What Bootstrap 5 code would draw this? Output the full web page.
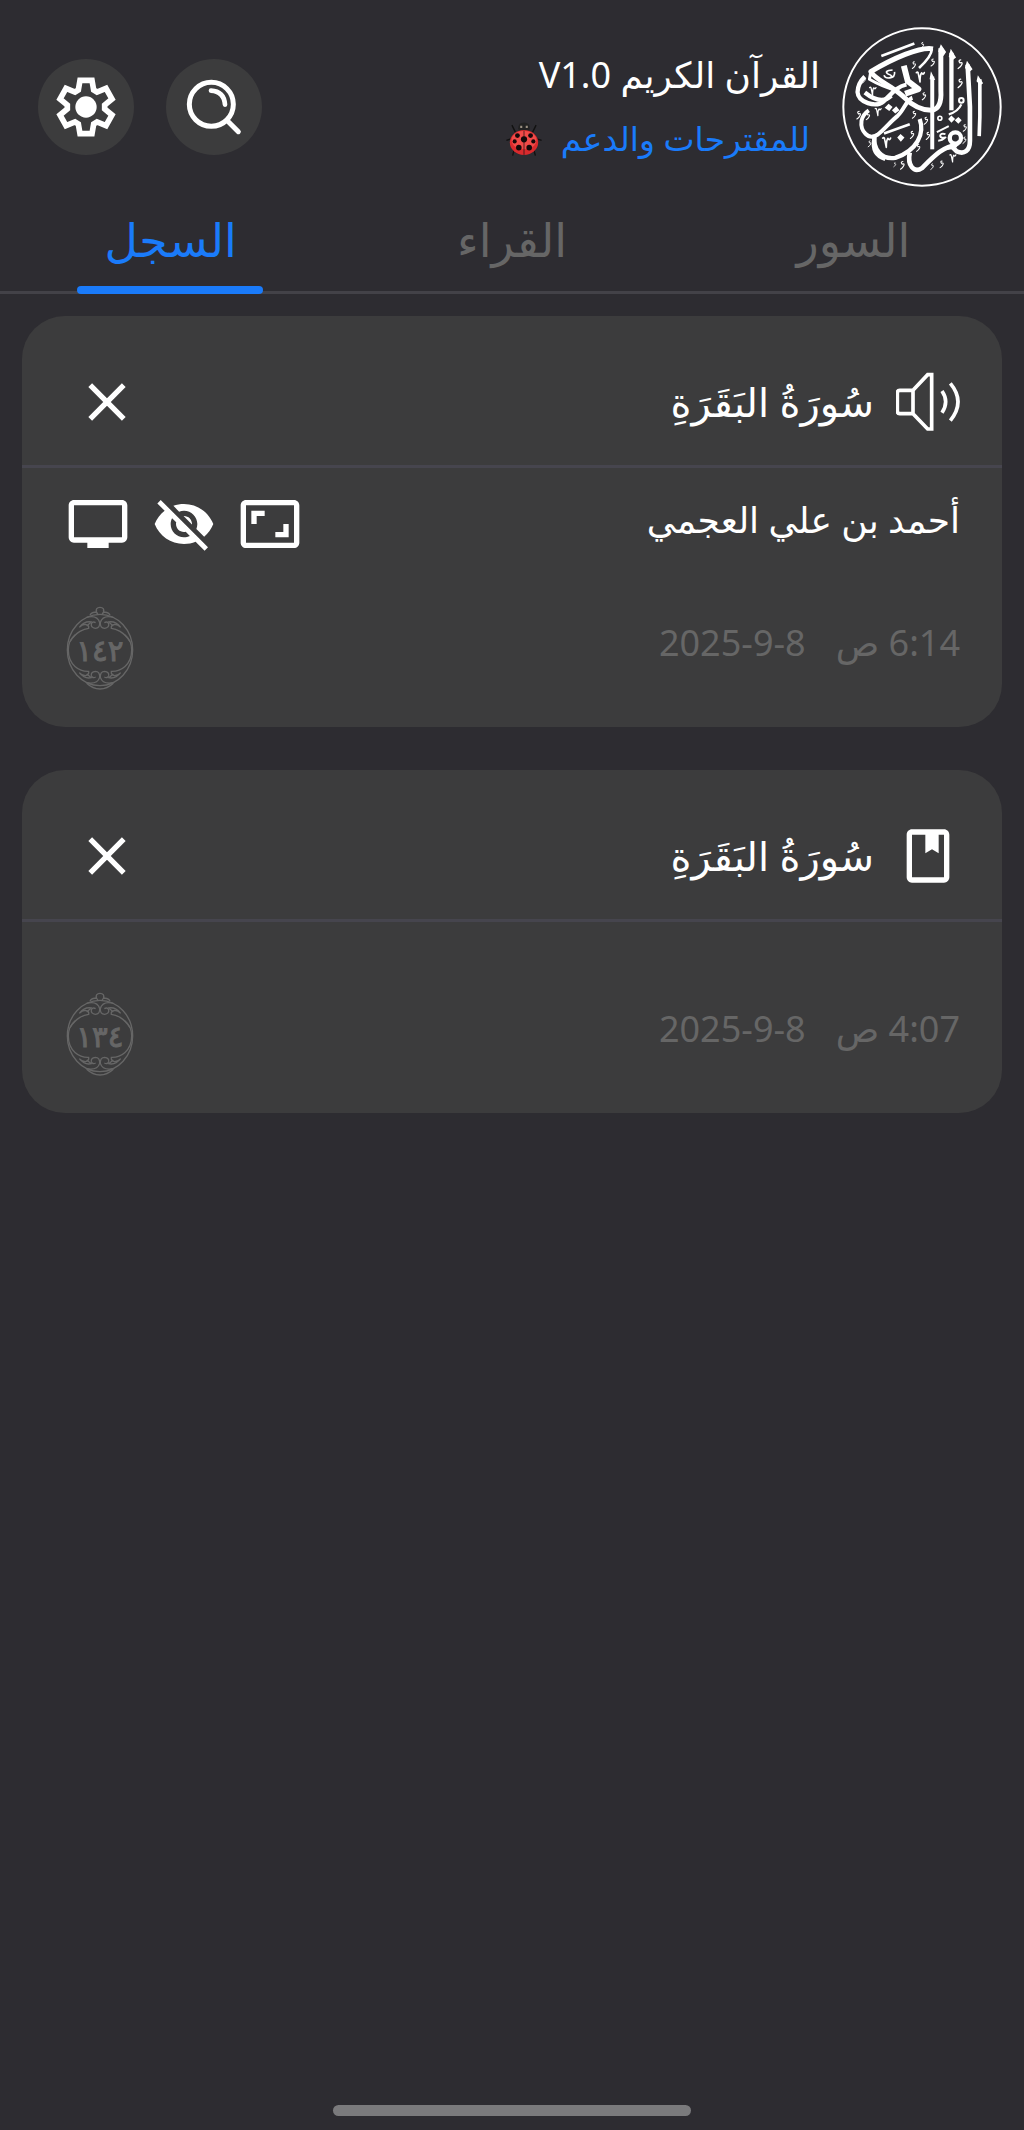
<!DOCTYPE html>
<html lang="ar" dir="rtl">
<head>
<meta charset="utf-8">
<meta name="viewport" content="width=device-width, initial-scale=1">
<title>القرآن الكريم</title>
<link rel="stylesheet" href="https://cdn.jsdelivr.net/npm/bootstrap@5.3.0/dist/css/bootstrap.min.css">
<style>
  body { background: #2d2c31; color: #fff; font-family: "Noto Sans", "DejaVu Sans", sans-serif; font-size: 36px; line-height: 48px; }
  svg { display: block; flex: none; }
  .app-head { padding: 27px 22px 0 38px; }
  .app-brand { gap: 22px; }
  .app-titles { gap: 16px; }
  .app-name { font-size: 36px; line-height: 48px; font-weight: 400; }
  .support-link { color: #1a7bfa; gap: 18px; padding-right: 10px; font-size: 33px; }
  .round-btn { width: 96px; height: 96px; background: #3c3c3d; }
  .head-actions { gap: 32px; }
  .app-tabs { border-bottom: 3px solid #434248; }
  .app-tabs .nav-link { position: relative; width: 100%; height: 104px; padding: 20px 0 0; line-height: 64px; font-size: 46px; color: #666; text-align: center; }
  .app-tabs .nav-link.active { color: #1a7bfa; }
  .app-tabs .nav-link.active::after { content: ""; position: absolute; bottom: -3px; left: 22.5%; right: 23%; height: 8px; border-radius: 4px; background: #1a7bfa; }
  .app-list { padding: 22px; gap: 43px; }
  .entry { background: #3c3c3d; border: 0; border-radius: 43px; color: #fff; }
  .entry-head { height: 152px; padding: 22px 42px 0; border-bottom: 3px solid #46454e; }
  .surah { font-size: 40px; line-height: 72px; font-weight: 400; }
  .close-btn { width: 86px; height: 86px; }
  .reciter-row { padding: 24px 42px 0 44px; height: 102px; }
  .date-row { padding: 36px 42px 37px 44px; }
  .date-row.roomy { padding-top: 70px; }
  .stamp { color: #666; font-size: 36px; gap: 30px; padding-bottom: 10px; }
  .tools { gap: 22px; }
  .home-bar { width: 35%; height: 11px; margin-bottom: 14px; background: #7a7a7c; }
</style>
<script src="https://cdn.jsdelivr.net/npm/bootstrap@5.3.0/dist/js/bootstrap.bundle.min.js"></script>
</head>
<body class="d-flex flex-column min-vh-100">

<svg width="0" height="0" class="position-absolute" aria-hidden="true">
  <symbol id="vee" viewBox="0 0 30 40" overflow="visible"><path d="M2 4q5-4 6 4l5 24q0-22 5-27q4 8 8-1" fill="none" stroke="#fff" stroke-width="5" stroke-linecap="round" stroke-linejoin="round"/></symbol>
  <symbol id="comma" viewBox="0 0 16 28" overflow="visible"><path d="M9 3q-8 1-2 8q8-3 5 4q-3 7-10 11" fill="none" stroke="#fff" stroke-width="3.5" stroke-linecap="round"/></symbol>
  <symbol id="medal" viewBox="50 48 204 252">
    <g fill="none" stroke="#666" stroke-width="4">
      <ellipse cx="152" cy="180" rx="98" ry="107"/>
      <path d="M62 155C80 125 105 116 118 115Q120 104 108 103Q98 103 90 112Q106 92 126 96L112 108M242 155C224 125 199 116 186 115Q184 104 196 103Q206 103 214 112Q198 92 178 96L192 108"/>
      <path d="M57 180Q57 150 78 134M247 180Q247 150 226 134M57 180C57 225 90 245 118 244Q120 255 108 257Q98 257 90 248Q106 268 126 263L112 252M247 180C247 225 214 245 186 244Q184 255 196 257Q206 257 214 248Q198 268 178 263L192 252"/>
      <path d="M112 82Q144 74 151 98Q152 115 138 115Q124 113 126 101Q130 93 139 98M192 82Q160 74 153 98Q152 115 166 115Q180 113 178 101Q174 93 165 98"/>
      <path d="M112 278Q144 284 151 262Q152 244 138 244Q124 246 126 257Q130 266 139 261M192 278Q160 284 153 262Q152 244 166 244Q180 246 178 257Q174 266 165 261"/>
      <path d="M122 76Q126 65 141 67Q138 52 152 52Q166 52 163 67Q178 65 182 76M146 72Q138 66 142 60M158 72Q166 66 162 60M112 280Q130 297 152 297Q174 297 192 280"/>
    </g>
  </symbol>
</svg>

<header class="app-head d-flex justify-content-between align-items-center">
  <div class="app-brand d-flex align-items-center">
    <svg width="160" height="160" viewBox="53 48 484 484" role="img" aria-label="شعار القرآن الكريم">
      <circle cx="295" cy="290" r="238" fill="none" stroke="#fff" stroke-width="6"/>
      <g fill="none" stroke="#fff" stroke-linejoin="round">
        <path d="M172 136L272 98" stroke-width="8"/>
        <path d="M180 370L258 342" stroke-width="8"/>
        <path d="M328 114C290 106 205 144 140 183C155 210 200 222 238 258C270 290 300 300 324 300C350 296 354 270 352 240V112" stroke-width="15"/>
        <path d="M325 114Q324 138 286 172" stroke-width="8"/>
        <path d="M140 183L136 206Q170 226 216 240" stroke-width="9"/>
        <path d="M240 165L252 212L284 236L244 250" stroke-width="18"/>
        <path d="M248 222C220 228 206 246 180 272C155 294 102 276 100 245Q101 218 122 198" stroke-width="13"/>
        <path d="M122 246Q172 286 202 256" stroke-width="13"/>
        <path d="M266 262C248 268 240 300 222 316C195 338 180 360 160 374C132 392 108 362 112 332Q116 312 134 300" stroke-width="12"/>
        <path d="M288 326C304 370 280 422 214 444C172 450 145 418 152 374" stroke-width="13"/>
        <path d="M151 384C146 410 150 436 184 447" stroke-width="13"/>
        <path d="M326 198V418" stroke-width="12"/>
        <path d="M384 126V300" stroke-width="13"/>
        <path d="M433 162L440 290V392C440 424 422 434 400 424L382 406" stroke-width="14"/>
        <path d="M470 206V320L468 378" stroke-width="11"/>
        <path d="M400 405C360 408 330 440 296 474C270 492 250 466 258 428" stroke-width="14"/>
        <circle cx="396" cy="384" r="17" stroke-width="13"/>
        <path d="M408 394Q398 412 370 414" stroke-width="12"/>
        <path d="M376 312Q404 304 414 282" stroke-width="7"/>
        <circle cx="414" cy="270" r="7" stroke-width="6"/>
        <circle cx="349" cy="324" r="6" stroke-width="5"/>
        <path d="M340 366L376 348M366 372q-16-4-16 6q2 8 16 4q-10 10-22 10" stroke-width="6"/>
        <path d="M206 178q-28 2-14 12q20 6 4 12q-12 2-16-8M212 184q2 16-14 18" stroke-width="5"/>
      </g>
      <path fill="#fff" d="M344 122l8-22l16 24l-8 12zM376 138l6-24l16 26l-10 8zM425 172l6-22l17 26l-10 8zM460 212l4-18l16 24l-9 6zM318 206l4-24l13 26zM182 292l12-12l12 10l-10 12zM204 300l13-12l10 12l-13 10zM220 382l10-10l12 10l-11 13zM374 326l10-10l11 10l-11 12zM394 330l11-10l10 10l-10 11z"/>
      <g>
        <use href="#vee" x="134" y="228" width="26" height="32"/><use href="#vee" x="150" y="292" width="26" height="30"/>
        <use href="#vee" x="276" y="182" width="30" height="40"/><use href="#vee" x="174" y="380" width="30" height="40"/>
        <use href="#vee" x="376" y="432" width="26" height="30"/>
        <use href="#comma" x="114" y="196" width="12" height="24"/><use href="#comma" x="96" y="300" width="16" height="28"/>
        <use href="#comma" x="124" y="304" width="16" height="26"/><use href="#comma" x="130" y="390" width="14" height="22"/>
        <use href="#comma" x="264" y="150" width="14" height="26"/><use href="#comma" x="290" y="92" width="13" height="22"/>
        <use href="#comma" x="320" y="142" width="16" height="26"/><use href="#comma" x="402" y="140" width="18" height="40"/>
        <use href="#comma" x="402" y="192" width="18" height="52"/><use href="#comma" x="294" y="240" width="15" height="34"/>
        <use href="#comma" x="300" y="318" width="15" height="26"/><use href="#comma" x="306" y="364" width="15" height="26"/>
        <use href="#comma" x="258" y="354" width="15" height="40"/><use href="#comma" x="264" y="300" width="15" height="26"/>
        <use href="#comma" x="276" y="400" width="16" height="26"/><use href="#comma" x="228" y="452" width="16" height="28"/>
        <use href="#comma" x="208" y="456" width="10" height="16"/><use href="#comma" x="320" y="458" width="12" height="24"/>
        <use href="#comma" x="348" y="448" width="14" height="30"/><use href="#comma" x="418" y="340" width="14" height="26"/>
        <use href="#comma" x="416" y="378" width="16" height="24"/>
      </g>
    </svg>
    <div class="app-titles d-flex flex-column">
      <h1 class="app-name mb-0">القرآن الكريم V1.0</h1>
      <a href="#" class="support-link d-flex align-items-center text-decoration-none">للمقترحات والدعم
        <svg width="38" height="36" viewBox="0 0 110 104" role="img" aria-label="دعسوقة">
          <path d="M30 32L20 12M80 32L90 12M22 50L4 56M88 50L106 56M28 78L22 100M82 78L88 100" stroke="#111" stroke-width="4" fill="none"/>
          <path d="M38 22Q38 4 55 4T72 22L68 30H42z" fill="#222"/><path d="M44 14h6v6h-6zM60 14h6v6h-6z" fill="#998f80"/>
          <ellipse cx="55" cy="62" rx="41" ry="36" fill="#d92a2d"/><ellipse cx="55" cy="55" rx="36" ry="27" fill="#f04a48"/>
          <path d="M55 28V98" stroke="#111" stroke-width="2"/>
          <g fill="#14090a"><circle cx="55" cy="53" r="9"/><circle cx="36" cy="42" r="7"/><circle cx="74" cy="42" r="7"/><circle cx="28" cy="59" r="6"/><circle cx="82" cy="59" r="6"/><circle cx="40" cy="77" r="8"/><circle cx="70" cy="77" r="8"/></g>
        </svg>
      </a>
    </div>
  </div>
  <div class="head-actions d-flex">
    <button type="button" class="round-btn btn rounded-circle border-0 p-0 d-flex align-items-center justify-content-center" aria-label="بحث">
      <svg width="64" height="64" viewBox="487 105 192 192" fill="none" stroke="#fff" stroke-linecap="round">
        <circle cx="575" cy="193" r="66" stroke-width="15"/><path d="M574 152Q613 154 616 194" stroke-width="14"/><path d="M623 242L656 275" stroke-width="15"/>
      </svg>
    </button>
    <button type="button" class="round-btn btn rounded-circle border-0 p-0 d-flex align-items-center justify-content-center" aria-label="الإعدادات">
      <svg width="64" height="64" viewBox="-96 -96 192 192">
        <path d="M-18-80H18L23-51L33-45L60-56L78-24L56-6V6L78 24L60 56L33 45L23 51L18 80H-18L-23 51L-33 45L-60 56L-78 24L-56 6V-6L-78-24L-60-56L-33-45L-23-51z" fill="none" stroke="#fff" stroke-width="17"/>
        <circle r="32" fill="#fff"/>
      </svg>
    </button>
  </div>
</header>

<nav class="app-tabs nav flex-nowrap" aria-label="الأقسام">
  <div class="col-4"><a class="nav-link" href="#">السور</a></div>
  <div class="col-4"><a class="nav-link" href="#">القراء</a></div>
  <div class="col-4"><a class="nav-link active" href="#" aria-current="page">السجل</a></div>
</nav>

<main class="app-list d-flex flex-column flex-grow-1">
  <article class="entry card">
    <div class="entry-head d-flex align-items-center justify-content-between">
      <div class="d-flex align-items-center tools">
        <svg width="64" height="64" viewBox="767 90 192 192" fill="none" stroke="#fff" stroke-width="11" aria-hidden="true">
          <path d="M818 151H778Q771 151 771 159V213Q771 221 778 221H818zM818 151L862 104H874V267H862L818 221"/>
          <path d="M905 153Q927 185 905 218M930 130Q976 185 930 242"/>
        </svg>
        <h2 class="surah mb-0">سُورَةُ البَقَرَةِ</h2>
      </div>
      <button type="button" class="close-btn btn border-0 p-0 d-flex align-items-center justify-content-center" aria-label="حذف">
        <svg width="64" height="64" viewBox="0 0 24 24"><path fill="#fff" d="M19 6.41L17.59 5 12 10.59 6.41 5 5 6.41 10.59 12 5 17.59 6.41 19 12 13.41 17.59 19 19 17.59 13.41 12z"/></svg>
      </button>
    </div>
    <div class="reciter-row d-flex align-items-start justify-content-between">
      <div class="pt-1">أحمد بن علي العجمي</div>
      <div class="tools d-flex">
        <svg width="64" height="64" viewBox="0 0 24 24" fill="#fff"><path d="M19 12h-2v3h-3v2h5v-5zM7 9h3V7H5v5h2V9zm14-6H3c-1.100 0-2 .9-2 2v14c0 1.100.9 2 2 2h18c1.100 0 2-.9 2-2V5c0-1.100-.9-2-2-2zm0 16.010H3V4.990h18v14.020z"/></svg>
        <svg width="64" height="64" viewBox="0 0 24 24" fill="#fff"><path d="M12 7c2.760 0 5 2.240 5 5 0 .650-.130 1.260-.360 1.830l2.920 2.920c1.510-1.260 2.700-2.890 3.430-4.750-1.730-4.390-6-7.500-11-7.500-1.400 0-2.740.250-3.980.700l2.160 2.160C10.740 7.130 11.350 7 12 7zM2 4.270l2.280 2.280.460.460C3.080 8.300 1.780 10.020 1 12c1.730 4.390 6 7.500 11 7.500 1.550 0 3.030-.300 4.380-.840l.420.420L19.730 22 21 20.730 3.270 3 2 4.270zM7.530 9.800l1.550 1.550c-.050.210-.080.430-.080.650 0 1.660 1.340 3 3 3 .220 0 .440-.030.650-.080l1.550 1.550c-.670.330-1.410.530-2.200.530-2.760 0-5-2.240-5-5 0-.790.200-1.530.530-2.200zm4.310-.780l3.150 3.150.020-.160c0-1.660-1.340-3-3-3l-.170.010z"/></svg>
        <svg width="64" height="64" viewBox="0 0 24 24" fill="#fff"><path d="M21 3H3c-1.100 0-2 .9-2 2v12c0 1.100.9 2 2 2h5v2h8v-2h5c1.100 0 2-.9 2-2V5c0-1.100-.9-2-2-2zm0 14H3V5h18v12z"/></svg>
      </div>
    </div>
    <div class="date-row d-flex align-items-center justify-content-between">
      <div class="stamp d-flex"><span>6:14 ص</span><bdi dir="ltr">2025-9-8</bdi></div>
      <svg width="68" height="84" viewBox="50 48 204 252"><use href="#medal" x="50" y="48" width="204" height="252"/><text x="152" y="212" direction="ltr" text-anchor="middle" font-family="DejaVu Sans" font-size="88" fill="#666" stroke="#666" stroke-width="3">١٤٢</text></svg>
    </div>
  </article>

  <article class="entry card">
    <div class="entry-head d-flex align-items-center justify-content-between">
      <div class="d-flex align-items-center tools">
        <svg width="64" height="64" viewBox="0 0 24 24" aria-hidden="true"><path fill="#fff" fill-rule="evenodd" d="M6 2h12c1.100 0 2 .9 2 2v16c0 1.100-.9 2-2 2H6c-1.100 0-2-.9-2-2V4c0-1.100.9-2 2-2zM6 4V20H18V4H16V11L13.500 9.500L11 11V4z"/></svg>
        <h2 class="surah mb-0">سُورَةُ البَقَرَةِ</h2>
      </div>
      <button type="button" class="close-btn btn border-0 p-0 d-flex align-items-center justify-content-center" aria-label="حذف">
        <svg width="64" height="64" viewBox="0 0 24 24"><path fill="#fff" d="M19 6.41L17.59 5 12 10.59 6.41 5 5 6.41 10.59 12 5 17.59 6.41 19 12 13.41 17.59 19 19 17.59 13.41 12z"/></svg>
      </button>
    </div>
    <div class="date-row roomy d-flex align-items-center justify-content-between">
      <div class="stamp d-flex"><span>4:07 ص</span><bdi dir="ltr">2025-9-8</bdi></div>
      <svg width="68" height="84" viewBox="50 48 204 252"><use href="#medal" x="50" y="48" width="204" height="252"/><text x="152" y="212" direction="ltr" text-anchor="middle" font-family="DejaVu Sans" font-size="88" fill="#666" stroke="#666" stroke-width="3">١٣٤</text></svg>
    </div>
  </article>
</main>

<footer class="d-flex justify-content-center"><div class="home-bar rounded-pill"></div></footer>
</body>
</html>
